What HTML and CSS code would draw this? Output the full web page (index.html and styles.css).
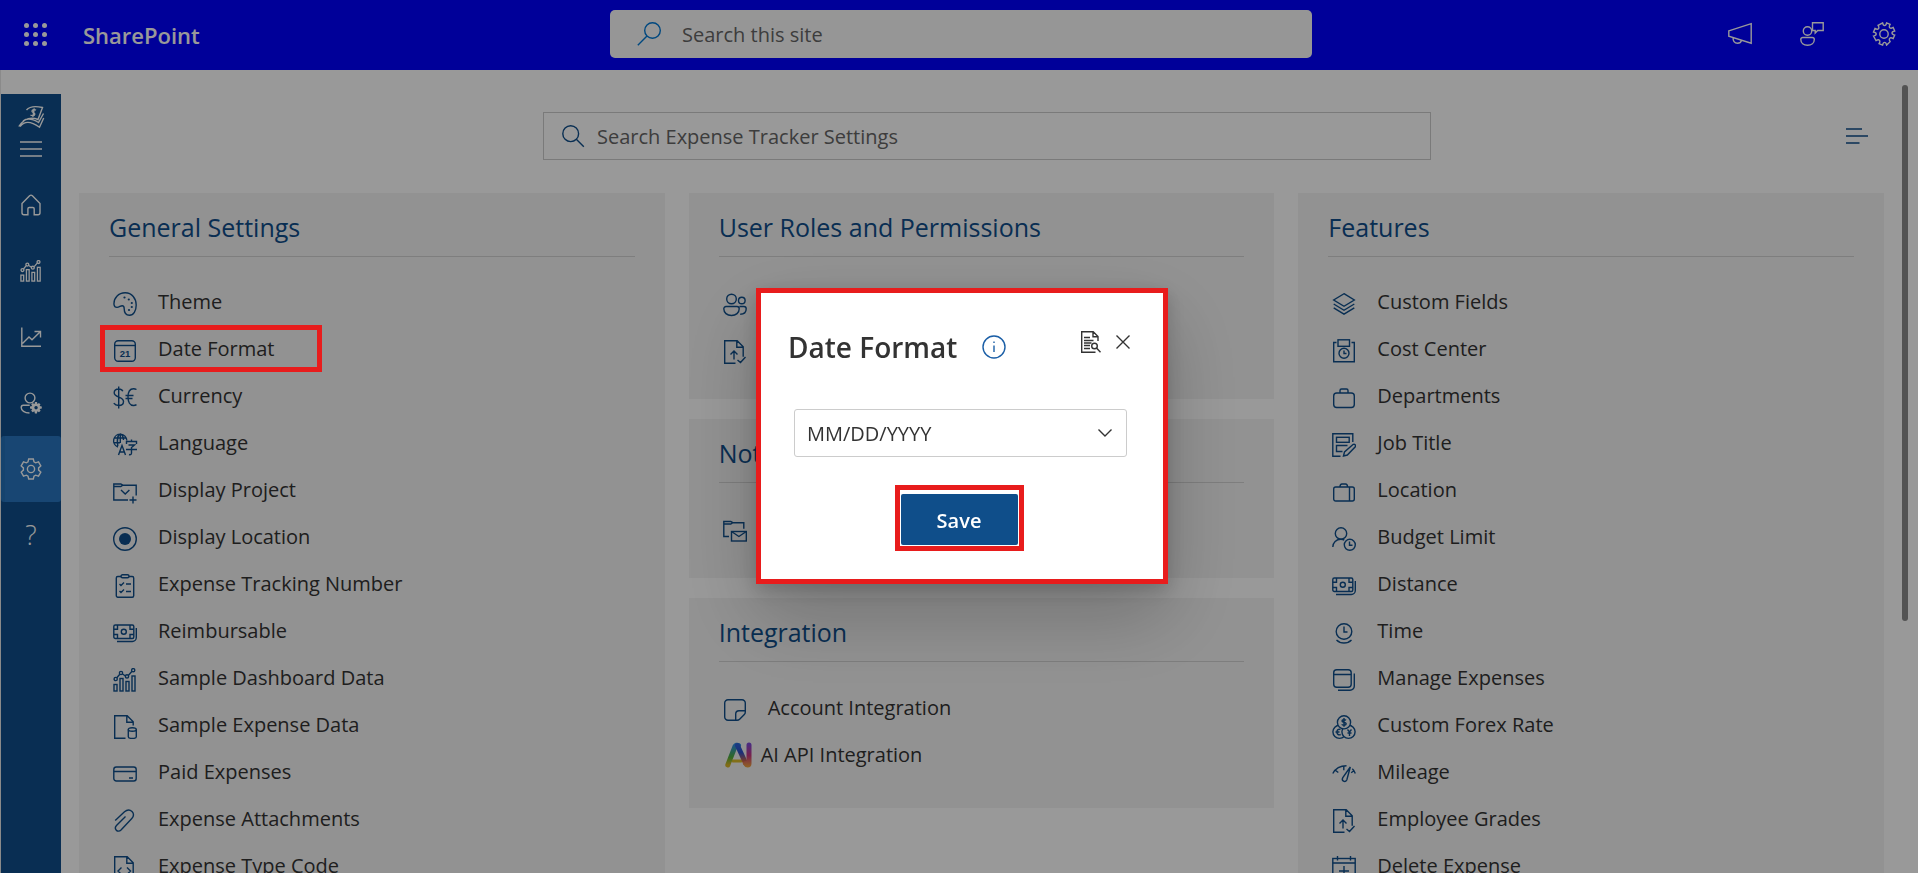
FILE: index.html
```html
<!DOCTYPE html>
<html lang="en">
<head>
<meta charset="utf-8">
<title>Expense Tracker Settings</title>
<meta name="viewport" content="width=device-width, initial-scale=1">
<link rel="stylesheet" href="styles.css">
</head>
<body>
<svg class="gradients" aria-hidden="true">
  <defs>
    <linearGradient id="ai-a" x1="0" y1="0" x2="0" y2="1"><stop offset="0" stop-color="#2f8de0"/><stop offset=".6" stop-color="#4fae3c"/><stop offset="1" stop-color="#d8b425"/></linearGradient>
    <linearGradient id="ai-b" x1="0" y1="0" x2="0" y2="1"><stop offset="0" stop-color="#2c5fd8"/><stop offset=".4" stop-color="#2f4fc8"/><stop offset="1" stop-color="#e8692c"/></linearGradient>
    <linearGradient id="ai-c" gradientUnits="userSpaceOnUse" x1="0" y1="2" x2="0" y2="25"><stop offset="0" stop-color="#7d49d8"/><stop offset=".5" stop-color="#c9377f"/><stop offset="1" stop-color="#eea23c"/></linearGradient>
  </defs>
</svg>
<svg class="sprite" aria-hidden="true">
  <symbol id="i-theme" viewBox="0 0 24 24"><path d="M1 12.500C.5 6 5.500.8 12.200.8 19 .8 23.200 6.500 23.200 13c0 6-2.700 10.200-6.700 10.200-4.300 0-5.300-3.500-5.300-6.500 0-1.900-.4-3-2-3-1.700 0-3 1.700-5.200 1.700-1.700 0-2.800-1.200-3-2.900z"/><g class="solid"><circle cx="11.500" cy="5.500" r="1.100"/><circle cx="15.800" cy="7.500" r="1.100"/><circle cx="18.800" cy="11" r="1.100"/><circle cx="18.800" cy="15" r="1.100"/><circle cx="16" cy="18" r="1.100"/></g></symbol>
  <symbol id="i-currency" viewBox="0 0 24 24"><path d="M9.800 5.200C9.200 3.800 7.800 3 5.800 3 3 3 1.200 4.500 1.200 6.800c0 5.200 9.300 3.500 9.300 8.700 0 2.500-2 4-4.700 4-2.300 0-4-.8-5-2.300M5.700.5V22.500M23.500 3.500c-1-.6-2-.8-3-.8-3.700 0-5.500 3.500-5.500 8.300s2 8.500 5.500 8.500c1.200 0 2.200-.3 3-.9M12.500 9.500h8M12.500 12.500h7"/></symbol>
  <symbol id="i-project" viewBox="0 0 24 24"><path d="M15 20H.8V4h7l2 1.200h13.400V15.500M.8 6.500h7l2-1.300M8 10l4.200 4 4.200-4M20 16.500v7M16.500 20h7"/></symbol>
  <symbol id="i-radio" viewBox="0 0 24 24"><circle cx="12" cy="12" r="11.300"/><circle class="solid" cx="12" cy="12" r="6"/></symbol>
  <symbol id="i-number" viewBox="0 0 24 24"><rect x="3.300" y="2.500" width="17.400" height="20.800" rx="1.500"/><rect x="8" y=".8" width="8" height="3" rx="1.500" fill="#f3f3f3"/><path d="M6.500 10l1.500 1.500 3-3M13 10h5M6.500 17l1.500 1.500 3-3M13 17.500h5"/></symbol>
  <symbol id="i-money" viewBox="0 0 24 24"><rect x=".8" y="4" width="20" height="13.500" rx="1.500"/><circle cx="10.800" cy="10.700" r="2.500"/><path d="M.8 8.200h3.700V4M17 4v4.200h3.800M.8 13.500h3.700v4M17 17.500v-4h3.800M23.300 7v9.500a4 4 0 0 1-4 4H4"/></symbol>
  <symbol id="i-chart" viewBox="0 0 24 24"><rect x="1" y="16.500" width="3" height="6.500"/><rect x="7" y="10.500" width="3" height="12.500"/><rect x="13" y="13.500" width="3" height="9.500"/><rect x="19" y="8" width="3" height="15"/><path d="M3.800 9.800L6.800 6.200M9.500 6l3 2M15.500 7.200l3.500-4"/><circle cx="2.700" cy="11" r="1.600"/><circle cx="8" cy="5" r="1.600"/><circle cx="14" cy="8.400" r="1.600"/><circle cx="20.200" cy="2.200" r="1.600"/></symbol>
  <symbol id="i-filedata" viewBox="0 0 24 24"><path d="M12.500 23.300H1.700V.8h12.500l6 6V10.500M13.800.8v6.500h6.400"/><ellipse cx="19.300" cy="14.500" rx="4" ry="1.800"/><path d="M15.300 14.500v7.300c0 2.200 8 2.200 8 0v-7.300"/></symbol>
  <symbol id="i-card" viewBox="0 0 24 24"><rect x=".8" y="5" width="22.400" height="14" rx="2.500"/><path d="M.8 9.500h22.400M16 16h4"/></symbol>
  <symbol id="i-clip" viewBox="0 0 24 24"><path d="M2.200 11.500L11.500 2.800c2.500-2.200 5.500-2.200 7.500-.3s2 4.800-.2 7L8 21c-1.500 1.500-3.500 1.500-4.700.2-1.200-1.300-1.200-3.200.2-4.700L12.500 7.500"/></symbol>
  <symbol id="i-code" viewBox="0 0 24 24"><path d="M1.700 23.300V.8h12.500l6 6v16.500zM13.800.8v6.500h6.400M8.500 11.500L5 15l3.500 3.500M14 11.500l3.500 3.500-3.500 3.500"/></symbol>
  <symbol id="i-people" viewBox="0 0 24 24"><circle cx="8.500" cy="6" r="4.800"/><circle cx="18.800" cy="7.500" r="3.300"/><path d="M3 13.500h11a2.200 2.200 0 0 1 2.200 2.200c0 4-3.200 6.800-7.700 6.800S.8 19.700.8 15.700A2.200 2.200 0 0 1 3 13.500zM16.500 13.500h4.500a2.200 2.200 0 0 1 2.200 2.200c0 3.500-2.500 5.500-6 5.500"/></symbol>
  <symbol id="i-filecheck" viewBox="0 0 24 24"><path d="M12.500 23.300H1.700V.8h12.500l6 6v10M13.800.8v6.500h6.400M11 19.500v-8M7.500 14.500l3.500-3.500 3.500 3.500M14.500 20l3 2.500 5-5.500"/></symbol>
  <symbol id="i-mail" viewBox="0 0 24 24"><path d="M6 17.500H.8V2.500h7l2 1.200h11v6M.8 5h7l2-1.300"/><rect x="8.500" y="12.500" width="14.800" height="9.500"/><path d="M8.500 12.500l7.400 5 7.400-5"/></symbol>
  <symbol id="i-note" viewBox="0 0 24 24"><path d="M14 22.300H5a3.300 3.300 0 0 1-3.300-3.300V5A3.300 3.300 0 0 1 5 1.700h14A3.300 3.300 0 0 1 22.300 5v9c0 1.200-.4 2-1 2.600l-4.700 4.700c-.6.600-1.400 1-2.600 1zM12.700 22v-6a3.300 3.300 0 0 1 3.300-3.300h6"/></symbol>
  <symbol id="i-layers" viewBox="0 0 24 24"><path d="M12 1.700l10.300 6.300L12 14.300 1.700 8zM1.700 12L12 18.300 22.300 12M1.700 15.800L12 22.100l10.300-6.300"/></symbol>
  <symbol id="i-cost" viewBox="0 0 24 24"><path d="M4.500 3.500H1.700v19.300h20.600V3.500h-2.800"/><rect x="6" y=".8" width="11.500" height="6.500"/><circle cx="12" cy="14.200" r="5"/><path d="M12 11.500v3h2.500"/></symbol>
  <symbol id="i-case" viewBox="0 0 24 24"><rect x="1.700" y="7" width="20.600" height="14.500" rx="3"/><path d="M8 7V4.500A1.500 1.500 0 0 1 9.500 3h5A1.500 1.500 0 0 1 16 4.500V7"/></symbol>
  <symbol id="i-job" viewBox="0 0 24 24"><path d="M8.500 23.300H.8V.8h20V9M10.500 18.500H4.500v-6h11"/><rect x="4.500" y="4.300" width="12.700" height="5"/><path d="M11.500 23l1-4 8.500-7.500c1.500-1 3.300.7 2.300 2.300L15.300 22z"/></symbol>
  <symbol id="i-luggage" viewBox="0 0 24 24"><rect x="1.700" y="7" width="20.600" height="14" rx="2"/><path d="M17.500 7v14M8 7c0-2 1-3 2-3h3.500c1.200 0 2 1 2 3"/></symbol>
  <symbol id="i-budget" viewBox="0 0 24 24"><circle cx="9" cy="6.500" r="5.700"/><path d="M.8 20c0-4.500 3.500-7.800 8-7.800 1.500 0 2.500.3 3.500.8"/><circle cx="17.800" cy="17.800" r="5.500"/><path d="M17.500 14.500v3.800h3"/></symbol>
  <symbol id="i-time" viewBox="0 0 24 24"><circle cx="12" cy="10.500" r="7.800"/><path d="M12 5.500V11h3.500M4.500 19c4 4 11 4 15 0"/></symbol>
  <symbol id="i-stack" viewBox="0 0 24 24"><rect x="1.700" y="1.700" width="17.500" height="17.500" rx="3"/><path d="M1.700 6.500h17.500M22.300 5.500V18a4.300 4.300 0 0 1-4.300 4.300H6"/></symbol>
  <symbol id="i-mileage" viewBox="0 0 24 24"><path d="M.8 11.500C3.500 6.500 8 3.800 14.500 3.800M3.300 8.200l3 2.300M11.800 3.800v4.500M18.300 5l-7.500 10.500c-1.800 3.500 2.300 5.500 4 2.500zM20.300 6.800c1.400 1.200 2.400 2.700 3 4.700M21.800 8.800l-2.600 2"/></symbol>
  <symbol id="i-calplus" viewBox="0 0 24 24"><rect x=".8" y="2.500" width="22.400" height="20.500"/><path d="M.8 7h22.400M5.500 0v4.500M18.500 0v4.500M12 10v10M7 15h10"/></symbol>
  <symbol id="i-search" viewBox="0 0 24 24"><circle cx="15.500" cy="8.500" r="7.800"/><path d="M10 14L.8 23.200"/></symbol>
  <symbol id="i-find" viewBox="0 0 24 24"><circle cx="9.700" cy="9.700" r="7.900"/><path d="M15.300 15.300l7.500 7.500"/></symbol>
  <symbol id="i-horn" viewBox="0 0 24 24"><path d="M.8 8.800L23.200 1.700v19.500L.8 14.200zM5 15.500c0 3 1.500 5.800 4.500 5.800 2.200 0 3.500-1 4-3"/></symbol>
  <symbol id="i-feedback" viewBox="0 0 24 24"><circle cx="7.500" cy="9" r="4.200"/><path d="M2.800 15.500h9.500a2 2 0 0 1 2 2c0 3.500-2.800 5.700-6.800 5.700S.8 21 .8 17.500a2 2 0 0 1 2-2zM12.500.8h10.700v7.700h-5.500l-2.500 2.500V8.500h-2.700z"/></symbol>
  <symbol id="i-cog" viewBox="0 0 24 24"><circle cx="12" cy="12" r="4.200"/><path d="M10 .9c.4 1.900.9 2.700 2 2.700s1.600-.8 2-2.700l3.500 1.400c-1 1.700-1.100 2.600-.3 3.400s1.700.7 3.400-.3l1.500 3.600c-1.900.4-2.700.9-2.700 2s.8 1.700 2.700 2.100l-1.500 3.500c-1.700-1-2.600-1.100-3.400-.3s-.7 1.700.3 3.400L14 23.100c-.4-1.900-.9-2.700-2-2.700s-1.600.8-2 2.700l-3.500-1.400c1-1.700 1.100-2.600.3-3.400s-1.700-.7-3.400.3L.9 14.100c1.900-.4 2.700-.9 2.700-2S2.800 10.400.9 10l1.500-3.600c1.700 1 2.600 1.100 3.400.3s.7-1.700-.3-3.400z" transform="translate(.600 0)"/></symbol>
  <symbol id="i-lines" viewBox="0 0 22 16"><path d="M0 1h22M0 8h22M0 15h22"/></symbol>
  <symbol id="i-home" viewBox="0 0 22 22"><path d="M2 9.500L9.600 1.800a2 2 0 0 1 2.800 0L20 9.500v9.300c0 1.200-.8 2-2 2h-3.800v-6c0-.8-.5-1.300-1.300-1.300H9.200c-.8 0-1.300.5-1.300 1.300v6H4c-1.200 0-2-.8-2-2z"/></symbol>
  <symbol id="i-trend" viewBox="0 0 22 22"><path d="M1.800 1.500v18.700H21M2.500 17.500L9 11l3 2.800L20 6M14.500 5.500h6v6"/></symbol>
  <symbol id="i-admin" viewBox="0 0 22 22"><circle cx="10" cy="6" r="4.900"/><path d="M9.500 21C4.500 21 1.200 18.500 1.200 15.500c0-1.500.8-2.200 2-2.200h6.500"/><path class="solid" fill-rule="evenodd" d="M15 10h2l.4 2 1.600-.9 1.500 1.400-1 1.500 2.300.5v2l-2.200.6 1 1.700-1.600 1.400-1.600-1-.5 2.300h-2l-.5-2.200-1.700 1-1.500-1.500 1-1.700-2.200-.6v-2l2.200-.5-1-1.500 1.500-1.500 1.800 1zM16 13.900a1.700 1.700 0 1 0 .1 0z"/></symbol>
  <symbol id="i-gear" viewBox="0 0 22 22"><circle cx="11" cy="11" r="3.600"/><path d="M8.700 1h4.600l.7 2.900 1.600.9 2.900-.9 2.300 4-2.200 2v2.200l2.200 2-2.300 4-2.900-.9-1.600.9-.7 2.900H8.700L8 18.100l-1.600-.9-2.900.9-2.300-4 2.200-2V9.900l-2.200-2 2.300-4 2.900.9L8 3.900z"/></symbol>
  <symbol id="i-align" viewBox="0 0 22 16"><path d="M0 1h16M0 8h22M0 15h13.500"/></symbol>
  <symbol id="i-info" viewBox="0 0 24 24"><circle cx="12" cy="12" r="11"/><path d="M12 10.500V17M12 6.500V8"/></symbol>
  <symbol id="i-preview" viewBox="0 0 21 22"><path d="M15.500 21.200H1.700V.8h11.500l4.800 4.800V10M13 .8v5h5M4 6.500h6M4 9.500h9.500M4 12h7.500M4 14.500h6M4 17.500h6"/><circle cx="14.500" cy="15" r="2.800"/><path d="M16.500 17l4 4.300"/></symbol>
  <symbol id="i-close" viewBox="0 0 14 14"><path d="M.5.500l13 13M13.500.500l-13 13"/></symbol>
  <symbol id="i-ai" viewBox="0 0 27 26"><g fill="none" stroke-width="5" stroke-linecap="round" stroke-linejoin="round"><path stroke="#d9b928" stroke-width="3" d="M8 19h8"/><path stroke="url(#ai-a)" d="M2.800 23L10 4.500a2.500 2.500 0 0 1 3.500-1"/><path stroke="url(#ai-b)" d="M12.500 3.500L20.500 21"/><path stroke="url(#ai-c)" d="M24 3v18.500c0 2-2.500 2-3.500 0"/></g></symbol>
</svg>

<header class="topbar">
  <div class="topbar-start">
    <button class="icon-btn waffle" aria-label="App launcher"><span></span><span></span><span></span><span></span><span></span><span></span><span></span><span></span><span></span></button>
    <a class="product" href="#">SharePoint</a>
  </div>
  <label class="site-search"><svg class="icon"><use href="#i-search"/></svg><input type="search" placeholder="Search this site" aria-label="Search this site"></label>
  <div class="topbar-end">
    <button class="icon-btn" aria-label="Announcements"><svg class="icon"><use href="#i-horn"/></svg></button>
    <button class="icon-btn" aria-label="Feedback"><svg class="icon"><use href="#i-feedback"/></svg></button>
    <button class="icon-btn" aria-label="Site settings"><svg class="icon"><use href="#i-cog"/></svg></button>
  </div>
</header>

<div class="shell">
  <nav class="rail" aria-label="Main">
    <div class="rail-head">
      <svg class="brand" viewBox="0 0 26 24"><path d="M8.500 5C11.500 1.500 17 .8 24.500 2.500L20 14.500C14 11.800 6.500 12.500.8 21.500M5 16C9.500 12.500 14 13.500 20.500 17.500L25.500 8.500M2 21.500c4.500-5.500 10-6 19.500.8L25.700 13"/><path d="M18 5.200c-1.500-1-4-.6-4 1s3 1.200 2.800 3c-.2 1.700-2.800 1.800-4.300.8M16.300 3.300l-1.500 8.500"/></svg>
      <button class="icon-btn" aria-label="Toggle menu"><svg class="bars"><use href="#i-lines"/></svg></button>
    </div>
    <a class="rail-item" href="#" aria-label="Home"><svg><use href="#i-home"/></svg></a>
    <a class="rail-item" href="#" aria-label="Dashboard"><svg><use href="#i-chart"/></svg></a>
    <a class="rail-item" href="#" aria-label="Reports"><svg><use href="#i-trend"/></svg></a>
    <a class="rail-item" href="#" aria-label="Administration"><svg><use href="#i-admin"/></svg></a>
    <a class="rail-item active" href="#" aria-label="Settings"><svg><use href="#i-gear"/></svg></a>
    <a class="rail-item help" href="#">?</a>
  </nav>

  <main class="content">
    <div class="toolbar">
      <label class="settings-search"><svg class="icon"><use href="#i-find"/></svg><input type="search" placeholder="Search Expense Tracker Settings" aria-label="Search Expense Tracker Settings"></label>
      <button class="icon-btn view-btn" aria-label="Change view"><svg class="bars"><use href="#i-align"/></svg></button>
    </div>

    <div class="columns">
      <section class="card">
        <h2>General Settings</h2>
        <ul>
          <li><a href="#"><svg class="icon"><use href="#i-theme"/></svg>Theme</a></li>
          <li class="marked"><a href="#"><svg class="icon" viewBox="0 0 24 24"><rect x="1.700" y="1.700" width="20.600" height="20.600" rx="3.500"/><path d="M1.700 6.500h20.600"/><text class="glyph" x="12" y="17.700" font-size="9.500" font-weight="700" text-anchor="middle">21</text></svg>Date Format</a></li>
          <li><a href="#"><svg class="icon"><use href="#i-currency"/></svg>Currency</a></li>
          <li><a href="#"><svg class="icon" viewBox="0 0 24 24"><path d="M13.800 7.500A6.600 6.600 0 1 0 5 14M4.800 13C3.500 5 5.500 1.500 7.300 1c2 .5 3 3 3.200 6M1 5h12.700M1 9.800h6M7.300 1v9"/><path d="M5.500 22L9 12.500 12.500 22M6.500 19h5M13.500 11V8.500h10V11M18.500 6.500v2M15.500 12h6l-3 2.500v5.500c0 1.500-1 2-2.500 1.500M13 16.500h11"/></svg>Language</a></li>
          <li><a href="#"><svg class="icon"><use href="#i-project"/></svg>Display Project</a></li>
          <li><a href="#"><svg class="icon"><use href="#i-radio"/></svg>Display Location</a></li>
          <li><a href="#"><svg class="icon"><use href="#i-number"/></svg>Expense Tracking Number</a></li>
          <li><a href="#"><svg class="icon"><use href="#i-money"/></svg>Reimbursable</a></li>
          <li><a href="#"><svg class="icon"><use href="#i-chart"/></svg>Sample Dashboard Data</a></li>
          <li><a href="#"><svg class="icon"><use href="#i-filedata"/></svg>Sample Expense Data</a></li>
          <li><a href="#"><svg class="icon"><use href="#i-card"/></svg>Paid Expenses</a></li>
          <li><a href="#"><svg class="icon"><use href="#i-clip"/></svg>Expense Attachments</a></li>
          <li><a href="#"><svg class="icon"><use href="#i-code"/></svg>Expense Type Code</a></li>
        </ul>
      </section>

      <div class="stack">
        <section class="card">
          <h2>User Roles and Permissions</h2>
          <ul>
            <li><a href="#" aria-label="User roles"><svg class="icon"><use href="#i-people"/></svg></a></li>
            <li><a href="#" aria-label="Approvals"><svg class="icon"><use href="#i-filecheck"/></svg></a></li>
          </ul>
        </section>
        <section class="card">
          <h2>Notifications</h2>
          <ul>
            <li><a href="#" aria-label="Email notifications"><svg class="icon"><use href="#i-mail"/></svg></a></li>
          </ul>
        </section>
        <section class="card">
          <h2>Integration</h2>
          <ul>
            <li><a href="#"><svg class="icon"><use href="#i-note"/></svg>Account Integration</a></li>
            <li><a class="ai-link" href="#"><svg class="ai-logo"><use href="#i-ai"/></svg>AI API Integration</a></li>
          </ul>
        </section>
      </div>

      <section class="card">
        <h2>Features</h2>
        <ul>
          <li><a href="#"><svg class="icon"><use href="#i-layers"/></svg>Custom Fields</a></li>
          <li><a href="#"><svg class="icon"><use href="#i-cost"/></svg>Cost Center</a></li>
          <li><a href="#"><svg class="icon"><use href="#i-case"/></svg>Departments</a></li>
          <li><a href="#"><svg class="icon"><use href="#i-job"/></svg>Job Title</a></li>
          <li><a href="#"><svg class="icon"><use href="#i-luggage"/></svg>Location</a></li>
          <li><a href="#"><svg class="icon"><use href="#i-budget"/></svg>Budget Limit</a></li>
          <li><a href="#"><svg class="icon"><use href="#i-money"/></svg>Distance</a></li>
          <li><a href="#"><svg class="icon"><use href="#i-time"/></svg>Time</a></li>
          <li><a href="#"><svg class="icon"><use href="#i-stack"/></svg>Manage Expenses</a></li>
          <li><a href="#"><svg class="icon" viewBox="0 0 24 24"><g fill="#f3f3f3"><circle cx="7.500" cy="16.800" r="6.600"/><circle cx="16.500" cy="16.800" r="6.600"/><circle cx="12" cy="7.300" r="6.600"/></g><path d="M14 5.300c-.8-.9-4-.9-4 .7s4.200.9 4.200 2.800-3.600 1.800-4.500.6M12 3v8.800M8.500 14.500c-2-1-3.600.5-3.600 2.500s1.600 3.500 3.800 2.500M3.500 17h4M15.500 14.500l2 2.500 2-2.500M17.500 17v4M15.500 18h4"/></svg>Custom Forex Rate</a></li>
          <li><a href="#"><svg class="icon"><use href="#i-mileage"/></svg>Mileage</a></li>
          <li><a href="#"><svg class="icon"><use href="#i-filecheck"/></svg>Employee Grades</a></li>
          <li><a href="#"><svg class="icon"><use href="#i-calplus"/></svg>Delete Expense</a></li>
        </ul>
      </section>
    </div>
  </main>
  <div class="scroll-track" aria-hidden="true"><div class="scroll-thumb"></div></div>
</div>

<div class="backdrop">
  <div class="dialog" role="dialog" aria-modal="true" aria-labelledby="dialog-title">
    <div class="dialog-head">
      <h1 id="dialog-title">Date Format</h1>
      <button class="icon-btn info" aria-label="Information"><svg class="icon"><use href="#i-info"/></svg></button>
      <div class="dialog-tools">
        <button class="icon-btn" aria-label="Open documentation"><svg class="preview"><use href="#i-preview"/></svg></button>
        <button class="icon-btn" aria-label="Close"><svg class="close"><use href="#i-close"/></svg></button>
      </div>
    </div>
    <div class="select-wrap">
      <select aria-labelledby="dialog-title"><option>MM/DD/YYYY</option><option>DD/MM/YYYY</option></select>
      <svg class="chevron" viewBox="0 0 14 8"><path d="M.5.500L7 7 13.500.500"/></svg>
    </div>
    <div class="save-mark"><button class="save">Save</button></div>
  </div>
</div>
</body>
</html>
```

FILE: styles.css
```css
:root {
  --navy: #0f4e8a;
  --mark: #e81c1c;
  --ink: #333;
}

*, *::after { box-sizing: border-box; }

body {
  margin: 0;
  height: 100vh;
  overflow: hidden;
  display: flex;
  flex-direction: column;
  background: #fff;
  color: var(--ink);
  font-family: "Segoe UI", "Open Sans", "Noto Sans", sans-serif;
  font-size: 20px;
  line-height: 28px;
}

svg {
  display: block;
  flex: none;
  overflow: visible;
  fill: none;
  stroke: currentColor;
  stroke-width: 1.4;
}

.gradients { position: absolute; width: 0; height: 0; }
.sprite { display: none; }

.icon { width: 24px; height: 24px; }
.solid { fill: currentColor; stroke: none; }
.glyph { fill: currentColor; stroke: none; font-family: "Liberation Sans", sans-serif; }

a { color: inherit; text-decoration: none; }
button, input, select { font: inherit; color: inherit; }
.icon-btn { display: block; padding: 0; border: 0; background: none; }

input {
  flex: 1;
  min-width: 0;
  padding: 2px 0 0;
  border: 0;
  outline: 0;
  background: none;
}
input::placeholder { color: #666; opacity: 1; }

/* Top bar */
.topbar {
  flex: none;
  display: grid;
  grid-template-columns: 1fr 702px 1fr;
  align-items: center;
  height: 70px;
  padding: 0 22px 2px 26px;
  background: #00f;
  color: #fff;
}
.topbar-start { display: flex; align-items: center; gap: 36px; margin-left: -2px; }
.topbar-end { display: flex; justify-content: flex-end; gap: 48px; }
.waffle { display: grid; grid-template-columns: repeat(3, 5px); gap: 4px; }
.waffle span { width: 5px; height: 5px; border-radius: 50%; background: #fff; }
.product { padding-top: 2px; font-size: 22px; font-weight: 600; }
.site-search {
  display: flex;
  align-items: center;
  gap: 21px;
  height: 48px;
  padding: 0 27px;
  border-radius: 5px;
  background: #fbfbfb;
  color: #0078d4;
}

/* Shell */
.shell { flex: 1; min-height: 0; display: flex; border-left: 1px solid #e6e6e6; }
.rail {
  flex: none;
  width: 60px;
  margin-top: 24px;
  background: var(--navy);
  color: #fff;
}
.rail-head {
  display: flex;
  flex-direction: column;
  align-items: center;
  gap: 12px;
  height: 78px;
  padding-top: 11px;
}
.brand { width: 26px; height: 24px; }
.bars { width: 22px; height: 16px; }
.rail-item {
  display: flex;
  align-items: center;
  justify-content: center;
  height: 66px;
}
.rail-item svg { width: 22px; height: 22px; }
.rail-item.active {
  border-left: 4px solid #2470b8;
  border-radius: 3px;
  padding-right: 4px;
  background: #2876c0;
}
.rail-item.help { font-size: 27px; font-weight: 300; }

.content { flex: 1; min-width: 0; padding: 42px 18px 0; }
.toolbar {
  display: grid;
  grid-template-columns: 1fr 888px 1fr;
  align-items: center;
  margin-bottom: 33px;
  padding: 0 16px 0 27px;
}
.settings-search {
  grid-column: 2;
  display: flex;
  align-items: center;
  gap: 12px;
  height: 48px;
  padding: 0 17px;
  border: 1px solid #ccc;
  color: var(--navy);
}
.view-btn { justify-self: end; color: var(--navy); }

.columns {
  display: grid;
  grid-template-columns: repeat(3, minmax(0, 1fr));
  align-items: start;
  gap: 24px;
}
.stack { display: flex; flex-direction: column; gap: 20px; }

.card { padding: 16px 30px 26px; background: #f3f3f3; }
.card h2 {
  margin: 0 0 21px;
  padding-bottom: 11px;
  border-bottom: 1px solid #d2d2d2;
  color: var(--navy);
  font-size: 25px;
  font-weight: 400;
  line-height: 36px;
}
.card ul { margin: 0; padding: 0; list-style: none; }
.card li { position: relative; }
.card li a { display: flex; align-items: center; height: 47px; padding-left: 4px; }
.card li .icon { margin: 4px 21px 0 0; color: var(--navy); }
.card li .ai-link { gap: 9px; padding-left: 6px; }
.stack .card h2 { margin-bottom: 22px; }
.stack .card:last-child { padding-bottom: 30px; }
.ai-logo { width: 27px; height: 26px; }

/* Callout frame that stays above the dimmed page */
.marked::after {
  content: "";
  position: absolute;
  z-index: 20;
  inset: 0 auto 0 -9px;
  width: 222px;
  border: 5px solid var(--mark);
}

.scroll-track { flex: none; width: 16px; padding-top: 15px; }
.scroll-thumb { width: 6px; height: 68%; border-radius: 3px; background: #8a8a8a; }

/* Dialog */
.backdrop {
  position: fixed;
  z-index: 10;
  inset: 0;
  display: flex;
  align-items: center;
  justify-content: center;
  padding: 0 0 2px 6px;
  background: rgba(0, 0, 0, .4);
}
.dialog {
  width: 412px;
  padding: 33px 33px 28px 27px;
  border: 5px solid var(--mark);
  background: #fff;
  box-shadow: 0 32px 72px rgba(0, 0, 0, .22), 0 6px 18px rgba(0, 0, 0, .18);
}
.dialog-head { display: flex; align-items: center; margin-bottom: 41px; }
.dialog h1 { margin: 0; font-size: 28px; font-weight: 600; line-height: 42px; }
.info { margin-left: 25px; color: #1a5ea6; }
.dialog-tools {
  display: flex;
  align-items: center;
  gap: 15px;
  margin: 0 0 9px auto;
}
.preview { width: 21px; height: 22px; }
.close { width: 14px; height: 14px; }
.select-wrap { display: grid; align-items: center; margin: 0 3px 28px 6px; }
.select-wrap > * { grid-area: 1 / 1; }
select {
  width: 100%;
  height: 48px;
  padding: 2px 12px 0;
  border: 1px solid #ccc;
  border-radius: 3px;
  background: #fff;
  appearance: none;
}
.chevron { width: 14px; height: 8px; margin-right: 15px; justify-self: end; }
.save-mark { width: 129px; margin: 0 auto; padding: 4px 1px 1px; border: 5px solid var(--mark); }
.save {
  display: block;
  width: 100%;
  height: 51px;
  padding: 3px 0 0;
  border: 0;
  border-radius: 2px;
  background: var(--navy);
  color: #fff;
  font-weight: 600;
}
```
